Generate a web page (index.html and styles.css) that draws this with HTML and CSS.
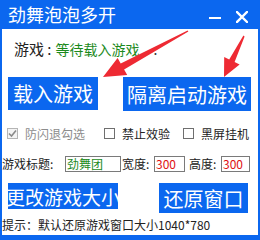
FILE: index.html
```html
<!DOCTYPE html>
<html lang="zh-CN">
<head>
<meta charset="utf-8">
<title>劲舞泡泡多开</title>
<link rel="stylesheet" href="styles.css">
</head>
<body>
<div class="window">
  <div class="titlebar">
    <span class="title">劲舞泡泡多开</span>
    <span class="controls">
      <svg class="ctl-min" width="12" height="12" viewBox="0 0 12 12"><rect x="0" y="6" width="12" height="2" fill="#fff"/></svg>
      <svg class="ctl-close" width="12" height="12" viewBox="0 0 12 12"><path d="M1 1 L11 11 M11 1 L1 11" stroke="#fff" stroke-width="2.4" stroke-linecap="square"/></svg>
    </span>
  </div>
  <div class="content">
    <div class="info"><span class="info-label">游戏 :</span><span class="info-status">等待载入游戏</span><span class="info-dot">.</span></div>
    <div class="actions">
      <button class="btn btn-load">载入游戏</button>
      <button class="btn btn-iso">隔离启动游戏</button>
    </div>
    <div class="checks">
      <label class="check check-1 disabled"><span class="box"><svg width="9" height="9" viewBox="0 0 9 9"><path d="M1 4.5 L3.5 7 L8 1.5" fill="none" stroke="#8a8a8a" stroke-width="1.6"/></svg></span><span class="ctext">防闪退勾选</span></label>
      <label class="check check-2"><span class="box"></span><span class="ctext">禁止效验</span></label>
      <label class="check check-3"><span class="box"></span><span class="ctext">黑屏挂机</span></label>
    </div>
    <div class="fields">
      <span class="flabel flabel-title">游戏标题:</span><span class="input input-title green">劲舞团</span>
      <span class="flabel flabel-w">宽度:</span><span class="input input-w red">300</span>
      <span class="flabel flabel-h">高度:</span><span class="input input-h red">300</span>
    </div>
    <div class="actions2">
      <button class="btn btn-resize">更改游戏大小</button>
      <button class="btn btn-restore">还原窗口</button>
    </div>
    <div class="hint">提示：默认还原游戏窗口大小1040*780</div>
  </div>
  <svg class="arrows" width="260" height="240" viewBox="0 0 260 240">
    <polygon fill="#ee2a33" points="187.6,30.4 120.7,63.4 117.6,57.9 103,77 127.2,75.1 124.1,69.6 188.4,31.6"/>
    <polygon fill="#ee2a33" points="243.4,35.6 229.2,59.5 224.2,57.0 224,77 239.6,64.5 234.6,62.1 244.6,36.4"/>
  </svg>
</div>
</body>
</html>
```
FILE: styles.css
```css
html, body {
  margin: 0;
  padding: 0;
  background: #fff;
}

.window {
  position: relative;
  width: 260px;
  height: 240px;
  box-sizing: border-box;
  padding: 0 2px 5px;
  background: #0b67ef;
  display: flex;
  flex-direction: column;
  font-family: "Noto Sans CJK SC", "Noto Sans", sans-serif;
  overflow: hidden;
}

.titlebar {
  height: 29px;
  flex: none;
  display: flex;
  align-items: center;
  justify-content: space-between;
  padding-left: 6px;
  color: #fff;
}

.title {
  font-size: 18px;
  line-height: 29px;
}

.controls {
  display: flex;
  align-items: center;
  gap: 15px;
  padding-right: 10px;
  padding-top: 4px;
}

.controls svg {
  display: block;
}

.content {
  flex: 1;
  background: #fff;
  display: flex;
  flex-direction: column;
}

.info {
  margin-top: 10px;
  height: 20px;
  line-height: 20px;
  padding-left: 12px;
  display: flex;
  align-items: baseline;
  white-space: nowrap;
}

.info-label {
  font-size: 15px;
  color: #222;
  margin-right: 4px;
}

.info-status {
  font-size: 14px;
  color: #1c8a1c;
}

.info-dot {
  font-size: 14px;
  color: #333;
  margin-left: 14px;
}

.btn {
  border: none;
  margin: 0;
  padding: 0;
  background: #0b67ef;
  color: #fff;
  font-family: "Noto Sans CJK SC", sans-serif;
  display: flex;
  align-items: center;
  justify-content: center;
  white-space: nowrap;
}

.actions {
  margin-top: 18px;
  height: 34px;
  display: flex;
  align-items: flex-start;
  padding-left: 6px;
}

.btn-load {
  width: 90px;
  height: 33px;
  font-size: 20px;
}

.btn-iso {
  width: 128px;
  height: 34px;
  font-size: 20px;
  margin-left: 25px;
}

.checks {
  margin-top: 14px;
  height: 16px;
  display: flex;
  align-items: center;
  padding-left: 5px;
  font-size: 12px;
  white-space: nowrap;
}

.check {
  display: flex;
  align-items: center;
  gap: 7px;
  color: #222;
}

.check-1 { width: 97px; }
.check-2 { width: 79px; }

.check.disabled {
  color: #8c8c8c;
}

.box {
  width: 11px;
  height: 11px;
  box-sizing: border-box;
  border: 1px solid #6f6f6f;
  background: #fff;
  display: flex;
  align-items: center;
  justify-content: center;
}

.check.disabled .box {
  border-color: #b5b5b5;
  background: #f4f4f4;
}

.box svg {
  display: block;
}

.fields {
  margin-top: 15px;
  height: 16px;
  display: flex;
  align-items: center;
  font-size: 12px;
  white-space: nowrap;
  color: #222;
}

.flabel {
  line-height: 16px;
  flex: none;
}

.flabel-title { width: 63px; }
.flabel-w { width: 32px; margin-left: 1px; }
.flabel-h { width: 32px; margin-left: 4px; }

.input {
  flex: none;
  height: 16px;
  box-sizing: border-box;
  border: 1px solid #7a7a7a;
  line-height: 14px;
  padding-left: 1px;
  background: #fff;
}

.input-title { width: 56px; }
.input-w { width: 31px; }
.input-h { width: 29px; }

.green { color: #1c8a1c; }
.red { color: #e01010; }

.actions2 {
  margin-top: 11px;
  height: 30px;
  display: flex;
  align-items: flex-start;
  padding-left: 6px;
}

.btn-resize {
  width: 110px;
  height: 26px;
  font-size: 19px;
}

.btn-restore {
  width: 89px;
  height: 30px;
  font-size: 20px;
  margin-left: 41px;
}

.hint {
  margin-top: 4px;
  height: 16px;
  line-height: 16px;
  font-size: 12px;
  color: #222;
  white-space: nowrap;
}

.arrows {
  position: absolute;
  top: 0;
  left: 0;
  pointer-events: none;
}
```
